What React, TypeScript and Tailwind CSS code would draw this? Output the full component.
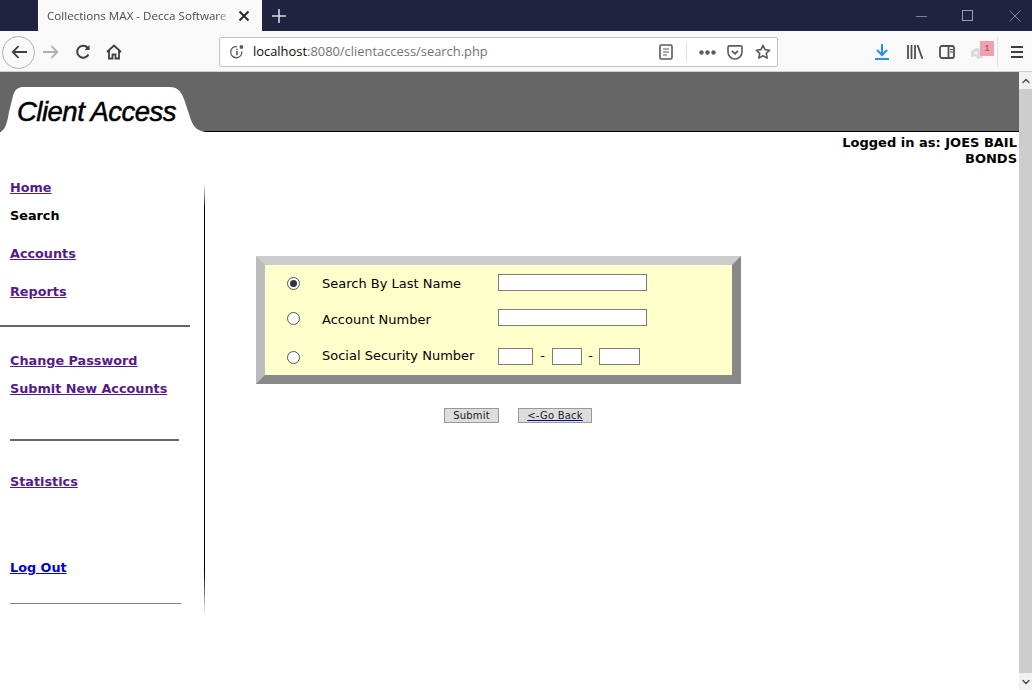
import { ChevronUp, ChevronDown } from "lucide-react";

const verdana = "font-['DejaVu_Sans','Liberation_Sans',sans-serif]";

function NavLink({ label, color = "text-[#551a8b]" }: { label: string; color?: string }) {
  return (
    <a href="#" className={`block text-[12.8px] leading-[16px] font-bold underline ${color}`}>
      {label}
    </a>
  );
}

function TabBar() {
  return (
    <div className="h-[31px] bg-[#202340] flex shrink-0">
      <div className="w-[38px]" />
      <div className="w-[224px] bg-[#f9f9fa] flex items-center pl-[9px] font-['Open_Sans',sans-serif] text-[11.6px] text-[#4a4a4f] overflow-hidden">
        <span className="whitespace-nowrap w-[185px] overflow-hidden [mask-image:linear-gradient(to_right,#000_92%,transparent)]">Collections MAX - Decca Software C</span>
        <svg width="12" height="12" viewBox="0 0 12 12" className="ml-[6px] shrink-0" stroke="#2a2a2e" strokeWidth="2" fill="none">
          <path d="M1.5 1.5l9 9M10.5 1.5l-9 9" />
        </svg>
      </div>
      <div className="w-[34px] flex items-center justify-center">
        <svg width="14" height="14" viewBox="0 0 14 14" stroke="#d5d6dc" strokeWidth="1.6">
          <path d="M7 0v14M0 7h14" />
        </svg>
      </div>
      <div className="flex-1" />
      <div className="flex items-center">
        <div className="w-[46px] flex justify-center">
          <svg width="11" height="12" viewBox="0 0 11 12" stroke="#7d8094"><path d="M0 6.5h11" /></svg>
        </div>
        <div className="w-[46px] flex justify-center">
          <svg width="11" height="11" viewBox="0 0 11 11" stroke="#9a9cae" fill="none"><rect x="0.5" y="0.5" width="10" height="10" /></svg>
        </div>
        <div className="w-[42px] pl-[7px] flex justify-center">
          <svg width="12" height="12" viewBox="0 0 12 12" stroke="#7d8094"><path d="M0.5 0.5l11 11M11.5 0.5l-11 11" /></svg>
        </div>
      </div>
    </div>
  );
}

function UrlBar() {
  return (
    <div className="w-[559px] h-[30px] ml-[97px] bg-white border border-[#c4c4c6] rounded-[2px] flex items-center shrink-0">
      <svg width="16" height="16" viewBox="0 0 16 16" className="ml-[9px]" fill="none" stroke="#5b5b5f" strokeWidth="1.3">
        <path d="M12.8 7.5A5.6 5.6 0 1 1 8 2.6" />
        <path d="M8 7v4.2M8 4.7v1.2" strokeWidth="1.6" />
        <circle cx="12.4" cy="3" r="1.9" fill="#5b5b5f" stroke="none" />
      </svg>
      <div className="ml-[8px] text-[12.9px] font-['Open_Sans',sans-serif] text-[#737373] whitespace-nowrap flex-1">
        <span className="text-[#0c0c0d]">localhost</span>:8080/clientaccess/search.php
      </div>
      <svg width="14" height="16" viewBox="0 0 14 16" fill="none" stroke="#5b5b5f" className="mr-[13px]">
        <rect x="1" y="1" width="12" height="14" rx="1.5" strokeWidth="1.6" />
        <path d="M4 5h6M4 8h6M4 11h4" strokeWidth="1.2" />
      </svg>
      <div className="w-px h-[20px] bg-[#e2e2e4] mr-[12px]" />
      <svg width="17" height="5" viewBox="0 0 17 5" fill="#5b5b5f" className="mr-[11px]">
        <circle cx="2.5" cy="2.5" r="2.2" /><circle cx="8.5" cy="2.5" r="2.2" /><circle cx="14.5" cy="2.5" r="2.2" />
      </svg>
      <svg width="16" height="15" viewBox="0 0 16 15" fill="none" stroke="#5b5b5f" strokeWidth="1.6" className="mr-[12px]">
        <path d="M1 2.2C1 1.4 1.6.9 2.3.9h11.4c.7 0 1.3.5 1.3 1.3v4.6A7 7 0 0 1 8 14 7 7 0 0 1 1 6.8z" />
        <path d="M5 5.8l3 2.9 3-2.9" strokeWidth="1.8" />
      </svg>
      <svg width="16" height="16" viewBox="0 0 16 16" fill="none" stroke="#5b5b5f" strokeWidth="1.6" className="mr-[6px]">
        <path d="M8 1.3l2 4.3 4.7.6-3.4 3.2.9 4.7L8 11.8l-4.2 2.3.9-4.7L1.3 6.200 6 5.600z" strokeLinejoin="round" />
      </svg>
    </div>
  );
}

function NavBar() {
  return (
    <div className="h-[41px] bg-[#f9f9fa] border-b border-[#cfcfd1] flex items-center pt-[2px] shrink-0">
      <div className="ml-[2px] w-[33px] h-[33px] rounded-full border border-[#b1b1b3] flex items-center justify-center shrink-0">
        <svg width="16" height="14" viewBox="0 0 16 14" fill="none" stroke="#3f3f43" strokeWidth="1.8">
          <path d="M16 7H2M7.500 1.200 1.700 7l5.800 5.800" />
        </svg>
      </div>
      <svg width="16" height="14" viewBox="0 0 16 14" fill="none" stroke="#b0b0b3" strokeWidth="1.8" className="ml-[8px] shrink-0">
        <path d="M0 7h14M8.500 1.200 14.300 7l-5.800 5.800" />
      </svg>
      <svg width="16" height="16" viewBox="0 0 16 16" fill="none" stroke="#3f3f43" strokeWidth="2" className="ml-[16px] shrink-0">
        <path d="M13.500 10.500A6 6 0 1 1 12.500 3.500L14 5" />
        <path d="M14.500 1v5h-5z" fill="#3f3f43" stroke="none" />
      </svg>
      <svg width="16" height="16" viewBox="0 0 16 16" fill="none" stroke="#3f3f43" strokeWidth="1.8" className="ml-[15px] shrink-0">
        <path d="M1 8l7-6.500L15 8M3 6.500V14.500h3.500v-4h3v4H13V6.500" />
      </svg>
      <UrlBar />
      <svg width="14" height="16" viewBox="0 0 14 16" fill="none" stroke="#2a8fe6" strokeWidth="2" className="ml-[97px] shrink-0">
        <path d="M7 0v10.500M2 6l5 5 5-5M0 15h14" />
      </svg>
      <svg width="16" height="14" viewBox="0 0 16 14" fill="none" stroke="#4f4f53" strokeWidth="1.8" className="ml-[18px] shrink-0">
        <path d="M1 0v14M4.500 0v14M8 0v14M10.500 0l5 14" />
      </svg>
      <svg width="16" height="14" viewBox="0 0 16 14" fill="none" stroke="#4f4f53" className="ml-[16px] shrink-0">
        <rect x="1" y="1" width="14" height="12" rx="2" strokeWidth="1.8" />
        <path d="M9.500 1v12" strokeWidth="1.800" />
        <path d="M11 4.500h3M11 7h3" strokeWidth="1.200" />
      </svg>
      <div className="ml-[14px] w-[26px] h-[22px] relative shrink-0">
        <svg width="17" height="14" viewBox="0 0 17 14" fill="#d9dadc" className="mt-[5px]">
          <path d="M2 5l5-3 5 1 3-3v6l-2 6-4 1-3-3-4 1z" />
          <circle cx="7" cy="7" r="1.500" fill="#f9f9fa" />
        </svg>
        <div className="absolute left-[11px] top-0 w-[14px] h-[15px] bg-[#f59fae] text-[#8a7076] text-[9px] font-bold text-center leading-[15px] font-['Liberation_Sans',sans-serif]">1</div>
      </div>
      <div className="ml-[2px] w-px h-[30px] bg-[#e0e0e2] shrink-0" />
      <div className="ml-[13px] w-[12px] flex flex-col gap-[3px] shrink-0">
        <div className="h-[2px] bg-[#3f3f43]" />
        <div className="h-[2px] bg-[#3f3f43]" />
        <div className="h-[2px] bg-[#3f3f43]" />
      </div>
    </div>
  );
}

function Banner() {
  return (
    <div className="h-[60px] bg-[#666666] border-b border-black relative shrink-0">
      <svg width="206" height="60" viewBox="0 0 206 60" className="absolute left-0 top-0">
        <path d="M0 60C5 58 7 52 9 40L13 24C15 17 18 15 24 15H170C177 15 181 19 184 27L191 48C194 56 198 59 206 60z" fill="#ffffff" />
      </svg>
      <div className="absolute left-[17px] top-[24px] font-['Liberation_Sans',sans-serif] italic text-[27.5px] leading-[32px] tracking-[-0.5px] text-black [-webkit-text-stroke:0.5px_black] whitespace-nowrap">
        Client Access
      </div>
    </div>
  );
}

function Sidebar() {
  return (
    <div className="w-[205px] shrink-0 pt-[13px] flex flex-col h-full relative">
      <div className="pl-[10px] flex flex-col">
        <NavLink label="Home" />
        <div className="mt-[12px] text-[12.8px] leading-[16px] font-bold text-black">Search</div>
        <div className="mt-[22px]"><NavLink label="Accounts" /></div>
        <div className="mt-[22px]"><NavLink label="Reports" /></div>
      </div>
      <div className="mt-[25px] w-[190px] h-[2px] bg-[#666666]" />
      <div className="mt-[26px] pl-[10px] flex flex-col gap-[12px]">
        <NavLink label="Change Password" />
        <NavLink label="Submit New Accounts" />
      </div>
      <div className="mt-[42px] ml-[10px] w-[169px] h-[2px] bg-[#666666]" />
      <div className="mt-[33px] pl-[10px]"><NavLink label="Statistics" /></div>
      <div className="mt-[70px] pl-[10px]"><NavLink label="Log Out" color="text-[#0000cc]" /></div>
      <div className="mt-[27px] ml-[10px] w-[171px] h-px bg-[#808080]" />
      <div className="absolute right-0 top-[16px] h-[432px] w-px bg-[linear-gradient(to_bottom,#ffffff,#000000_6%,#000000_90%,#ffffff)]" />
    </div>
  );
}

function Radio({ checked = false }: { checked?: boolean }) {
  return (
    <div className="w-[13px] h-[13px] rounded-full border border-[#555555] bg-white flex items-center justify-center shrink-0">
      {checked && <div className="w-[7px] h-[7px] rounded-full bg-[#333344]" />}
    </div>
  );
}

function Field({ width }: { width: string }) {
  return <input type="text" className={`${width} h-[17px] bg-white border border-[#7f7f6f] outline-none block`} />;
}

function Dash({ width }: { width: string }) {
  return <span className={`${width} text-center text-[13px] leading-none pb-[3px]`}>-</span>;
}

function Row({ label, height, labelPad, checked, children }: { label: string; height: string; labelPad: string; checked?: boolean; children: React.ReactNode }) {
  return (
    <div className={`flex items-center ${height}`}>
      <div className="w-[57px] pl-[22px] pt-[1px]"><Radio checked={checked} /></div>
      <div className={`w-[176px] text-[13px] text-black whitespace-nowrap ${labelPad}`}>{label}</div>
      {children}
    </div>
  );
}

function SearchForm() {
  return (
    <div className="flex-1 min-w-0 pl-[51px] pt-[89px]">
      <div className="w-[485px] h-[128px] border-[9px] border-t-[#cccccc] border-l-[#bbbbbb] border-r-[#888888] border-b-[#888888] bg-[#ffffcc] flex flex-col">
        <Row label="Search By Last Name" height="h-[35px]" labelPad="pt-[2px]" checked>
          <Field width="w-[149px]" />
        </Row>
        <Row label="Account Number" height="h-[35px]" labelPad="pt-[4px]">
          <Field width="w-[149px]" />
        </Row>
        <Row label="Social Security Number" height="h-[40px] pt-[3px]" labelPad="pb-[2px]">
          <Field width="w-[35px]" />
          <Dash width="w-[19px]" />
          <Field width="w-[30px]" />
          <Dash width="w-[17px]" />
          <Field width="w-[41px]" />
        </Row>
      </div>
      <div className="flex mt-[24px] pl-[188px] gap-[19px]">
        <button className="w-[55px] h-[15px] bg-[#dddddd] border border-[#999999] text-[10px] leading-[13px] text-[#222222] tracking-[0.2px]">Submit</button>
        <a href="#" className="w-[74px] h-[15px] bg-[#dddddd] border border-[#999999] text-[10px] leading-[13px] text-[#222222] text-center block tracking-[0.2px]">
          <span className="underline decoration-[#000099]">&lt;-Go Back</span>
        </a>
      </div>
    </div>
  );
}

function Scrollbar() {
  return (
    <div className="w-[13px] bg-[#f1f1f1] flex flex-col shrink-0">
      <div className="h-[17px] flex items-center justify-center"><ChevronUp size={12} strokeWidth={3} color="#505050" /></div>
      <div className="flex-1 bg-[#cdcdcd]" />
      <div className="h-[17px] flex items-center justify-center"><ChevronDown size={12} strokeWidth={3} color="#505050" /></div>
    </div>
  );
}

export default function App() {
  return (
    <div className={`w-[1032px] h-[690px] overflow-hidden bg-white flex flex-col ${verdana}`}>
      <TabBar />
      <NavBar />
      <div className="flex-1 min-h-0 flex">
        <div className="w-[1019px] flex flex-col shrink-0">
          <Banner />
          <div className="text-right pr-[2px] pl-[800px] pt-[3px] text-[13px] leading-[16px] font-bold text-black">
            Logged in as: JOES BAIL BONDS
          </div>
          <div className="flex flex-1 min-h-0">
            <Sidebar />
            <SearchForm />
          </div>
        </div>
        <Scrollbar />
      </div>
    </div>
  );
}
